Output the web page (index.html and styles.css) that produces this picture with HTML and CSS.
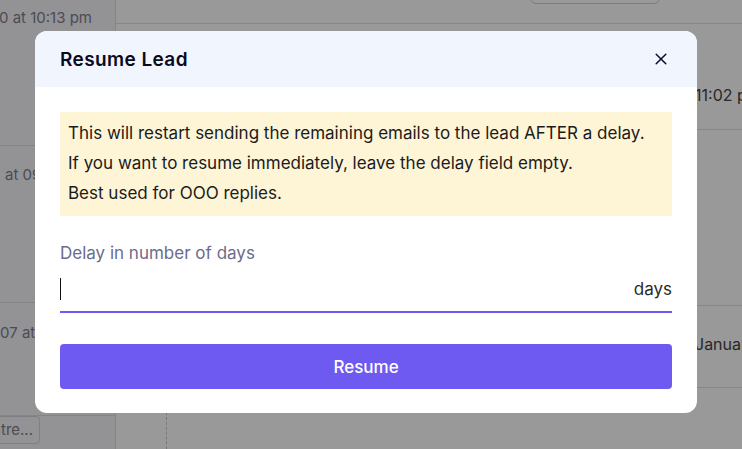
FILE: index.html
```html
<!DOCTYPE html>
<html>
<head>
<meta charset="utf-8">
<link rel="stylesheet" href="styles.css">
</head>
<body>
<div class="page">
  <aside class="sidebar">
    <div class="side-row r1"><span class="side-text">Dec 20, 2020 at 10:13 pm</span></div>
    <div class="side-row r2"><span class="side-text">at 09:41 am</span></div>
    <div class="side-row r3"><span class="side-text">07 at 11:20 am</span></div>
    <div class="side-row r4"><span class="chip">Centre...</span></div>
  </aside>
  <main class="main">
    <div class="topbar"><span class="top-btn"></span></div>
    <div class="row ra"><span class="row-text">11:02 pm</span></div>
    <div class="row rb"></div>
    <div class="row rc"><span class="row-text">January</span></div>
    <div class="row rd"><span class="dash"></span></div>
  </main>
</div>

<div class="overlay">
  <div class="modal">
    <div class="modal-header">
      <h2 class="modal-title">Resume Lead</h2>
      <button class="close" aria-label="Close">
        <svg width="12" height="12" viewBox="0 0 12 12"><path d="M1.2 1.2L10.8 10.8M10.8 1.2L1.2 10.8" stroke="#0b0b2b" stroke-width="1.5" stroke-linecap="round"/></svg>
      </button>
    </div>
    <div class="modal-body">
      <div class="notice">
        <p>This will restart sending the remaining emails to the lead AFTER a delay.</p>
        <p>If you want to resume immediately, leave the delay field empty.</p>
        <p>Best used for OOO replies.</p>
      </div>
      <label class="label">Delay in number of days</label>
      <div class="field">
        <span class="caret"></span>
        <input class="input" type="text">
        <span class="suffix">days</span>
      </div>
      <button class="resume">Resume</button>
    </div>
  </div>
</div>
</body>
</html>
```
FILE: styles.css
```css
* { box-sizing: border-box; }
html, body { margin: 0; padding: 0; }
body {
  width: 742px;
  height: 449px;
  overflow: hidden;
  font-family: Inter, "Noto Sans", sans-serif;
  background: #ffffff;
}
.page {
  display: flex;
  height: 449px;
}
.sidebar {
  width: 116px;
  flex: none;
  background: #f5f5fa;
  border-right: 1px solid #dcdce2;
  display: flex;
  flex-direction: column;
}
.side-row {
  display: flex;
  overflow: hidden;
  white-space: nowrap;
  border-bottom: 1px solid #dcdce2;
  font-size: 15px;
  color: #7e7e8c;
}
.r1 { height: 146px; padding-top: 8px; justify-content: flex-end; padding-right: 23px; }
.r2 { height: 157px; padding-top: 19px; padding-left: 5px; }
.r3 { height: 113px; padding-top: 20px; padding-left: 0; }
.r4 {
  flex: 1;
  border-bottom: none;
  justify-content: flex-end;
  align-items: flex-start;
  padding-right: 75px;
}
.chip {
  flex: none;
  height: 28px;
  line-height: 20px;
  padding: 3px 6px;
  border: 1px solid #d4d4da;
  border-radius: 4px;
}
.main {
  flex: 1;
  min-width: 0;
  display: flex;
  flex-direction: column;
}
.topbar {
  height: 24px;
  border-bottom: 1px solid #dfdfe3;
  display: flex;
  justify-content: flex-end;
  padding-right: 82px;
}
.top-btn {
  width: 130px;
  height: 30px;
  margin-top: -26px;
  border: 1px solid #d0d0d6;
  border-radius: 6px;
}
.row {
  border-bottom: 1px solid #dfdfe3;
  padding-left: 579px;
  white-space: nowrap;
  overflow: hidden;
  font-size: 16px;
  color: #444;
}
.ra { height: 106px; padding-top: 61px; }
.rb { height: 176px; }
.rc { height: 82px; padding-top: 28px; }
.rd { flex: 1; border-bottom: none; padding-left: 50px; }
.dash {
  display: block;
  height: 100%;
  border-left: 1.5px dashed #c9c9cf;
}

.overlay {
  position: fixed;
  inset: 0;
  background: rgba(0, 0, 0, 0.4);
  padding: 31px 0 0 35px;
}
.modal {
  width: 662px;
  background: #ffffff;
  border-radius: 12px;
  overflow: hidden;
}
.modal-header {
  height: 56px;
  background: #f1f5fe;
  display: flex;
  align-items: center;
  justify-content: space-between;
  padding: 0 29px 0 25px;
}
.modal-title {
  margin: 0;
  font-size: 19px;
  font-weight: 600;
  color: #0a0a1f;
  letter-spacing: 0.4px;
}
.close {
  border: none;
  background: none;
  padding: 0;
  width: 14px;
  height: 14px;
  display: flex;
  align-items: center;
  justify-content: center;
}
.modal-body {
  padding: 25px 25px 24px;
  display: flex;
  flex-direction: column;
}
.notice {
  background: #fef5d7;
  padding: 6px 8px 8px;
}
.notice p {
  margin: 0;
  font-size: 17px;
  line-height: 30px;
  color: #1b1b1b;
}
.label {
  margin-top: 27px;
  font-size: 17px;
  line-height: 20px;
  color: #6c6c8b;
}
.field {
  margin-top: 4px;
  height: 46px;
  display: flex;
  align-items: center;
  border-bottom: 2px solid #6e5af0;
}
.caret {
  width: 1px;
  height: 22px;
  background: #111;
  flex: none;
}
.input {
  flex: 1;
  min-width: 0;
  border: none;
  outline: none;
  background: transparent;
  font: inherit;
  padding: 0;
}
.suffix {
  font-size: 17px;
  color: #2a2a2a;
}
.resume {
  margin-top: 31px;
  height: 45px;
  border: none;
  border-radius: 4px;
  background: #6e5af0;
  color: #ffffff;
  font-family: Inter, "Noto Sans", sans-serif;
  font-size: 17px;
  font-weight: 500;
}
```
